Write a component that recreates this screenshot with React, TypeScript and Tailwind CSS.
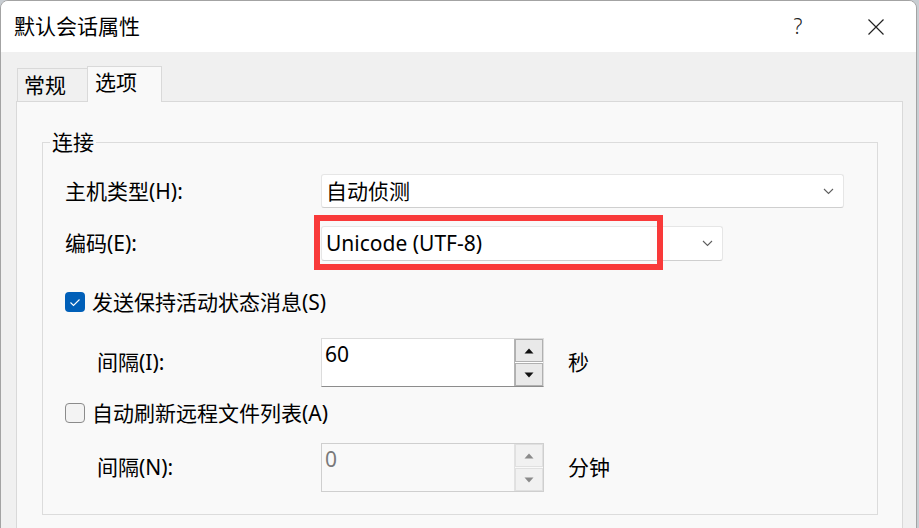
import React from "react";

const font = "font-['Noto_Sans','Noto_Sans_CJK_SC',sans-serif]";

function Chevron() {
  return (
    <svg width="11" height="7" viewBox="0 0 11 7" className="shrink-0">
      <path d="M1 1 L5.5 5.5 L10 1" fill="none" stroke="#5f5f5f" strokeWidth="1.1" />
    </svg>
  );
}

function Combo({ width, text }: { width: string; text: string }) {
  return (
    <div
      className={`${width} h-full flex items-center justify-between bg-white border border-[#e6e6e6] border-b-[#cfcfcf] rounded-[3px] pl-[4px] pr-[9px]`}
    >
      <span className="text-[21px] leading-none text-black">{text}</span>
      <Chevron />
    </div>
  );
}

function Tri({ up, color }: { up: boolean; color: string }) {
  return (
    <svg width="10" height="6" viewBox="0 0 10 6">
      {up ? <path d="M0.5 5.5 L5 0.5 L9.5 5.5 Z" fill={color} /> : <path d="M0.5 0.5 L5 5.5 L9.5 0.5 Z" fill={color} />}
    </svg>
  );
}

function Spin({ value, disabled }: { value: string; disabled?: boolean }) {
  return (
    <div
      className={`w-[223px] h-full flex border ${
        disabled ? "border-[#cfcfcf] bg-[#f9f9f9]" : "border-[#dcdcdc] border-b-[#8c8c8c] bg-white"
      }`}
    >
      <div className={`flex-1 pl-[3px] pt-[2px] text-[21px] leading-[26px] ${disabled ? "text-[#7a7a7a]" : "text-black"}`}>
        {value}
      </div>
      <div className={`w-[29px] flex flex-col gap-[1px] border-l ${disabled ? "border-[#e2e2e2]" : "border-[#b4b4b4]"}`}>
        <div
          className={`flex-1 flex items-center justify-center border ${
            disabled ? "bg-[#f1f1f1] border-[#e0e0e0]" : "bg-[#e9e9e9] border-[#b0b0b0]"
          }`}
        >
          <Tri up color={disabled ? "#8a8a8a" : "#111"} />
        </div>
        <div
          className={`flex-1 flex items-center justify-center border ${
            disabled ? "bg-[#f1f1f1] border-[#e0e0e0]" : "bg-[#e9e9e9] border-[#b0b0b0]"
          }`}
        >
          <Tri up={false} color={disabled ? "#8a8a8a" : "#111"} />
        </div>
      </div>
    </div>
  );
}

function Checkbox({ checked }: { checked: boolean }) {
  return checked ? (
    <div className="w-[20px] h-[20px] rounded-[4px] bg-[#005fb8] flex items-center justify-center shrink-0">
      <svg width="12" height="9" viewBox="0 0 12 9">
        <path d="M1.5 4.5 L4.5 7.5 L10.5 1.5" fill="none" stroke="white" strokeWidth="1.1" />
      </svg>
    </div>
  ) : (
    <div className="w-[20px] h-[20px] rounded-[4px] bg-[#f3f3f3] border border-[#8b8b8b] shrink-0" />
  );
}

export default function App() {
  return (
    <div className={`w-[919px] h-[528px] overflow-hidden bg-[#c8cdd2] ${font} text-black`}>
      <div className="w-[917px] h-[560px] rounded-t-[8px] border border-[#a3a3a3] bg-[#f0f0f0] overflow-hidden">
        {/* Title bar */}
        <div className="h-[51px] bg-white flex items-center">
          <div className="pl-[13px] text-[21px] leading-none text-black">默认会话属性</div>
          <div className="flex-1" />
          <div className="w-[20px] text-[21px] leading-none text-[#222] font-light mr-[60px] text-center">?</div>
          <svg width="16" height="16" viewBox="0 0 16 16" className="mr-[32px]">
            <path d="M0.5 0.5 L15.5 15.5 M15.5 0.5 L0.5 15.5" stroke="#222" strokeWidth="1.2" />
          </svg>
        </div>

        {/* Body */}
        <div className="pl-[15px] pt-[14px]">
          {/* Tabs */}
          <div className="flex items-end h-[35px] pl-[1px]">
            <div className="w-[70px] h-[33px] border border-r-0 border-b-0 border-[#d9d9d9] bg-[#f0f0f0] flex items-center pl-[6px]">
              <span className="text-[21px] leading-none">常规</span>
            </div>
            <div className="relative z-10 w-[75px] h-[36px] -mb-[1px] border border-b-0 border-[#d9d9d9] bg-[#f9f9f9] flex items-start pt-[5px] pl-[7px]">
              <span className="text-[21px] leading-none">选项</span>
            </div>
          </div>

          {/* Panel */}
          <div className="w-[887px] h-[460px] border border-[#d9d9d9] bg-[#f9f9f9] pl-[25px] pt-[40px]">
            {/* Group box */}
            <div className="relative w-[836px] border border-[#dcdcdc] pt-[31px] pb-[22px]">
              <div className="absolute left-[7px] -top-[13px] px-[2px] bg-[#f9f9f9] text-[21px] leading-[24px]">连接</div>

              <div className="flex items-center h-[34px] pl-[22px]">
                <div className="w-[256px] text-[21px] leading-none">主机类型(H):</div>
                <Combo width="w-[523px]" text="自动侦测" />
              </div>

              <div className="flex items-center h-[35px] pl-[22px] mt-[18px]">
                <div className="w-[256px] text-[21px] leading-none">编码(E):</div>
                <Combo width="w-[402px]" text="Unicode (UTF-8)" />
              </div>

              <div className="flex items-center h-[20px] pl-[22px] mt-[31px] gap-[7px]">
                <Checkbox checked />
                <span className="text-[21px] leading-none">发送保持活动状态消息(S)</span>
              </div>

              <div className="flex items-center h-[49px] pl-[22px] mt-[26px]">
                <div className="w-[256px] pl-[32px] text-[21px] leading-none">间隔(I):</div>
                <Spin value="60" />
                <span className="ml-[24px] text-[21px] leading-none">秒</span>
              </div>

              <div className="flex items-center h-[20px] pl-[22px] mt-[16px] gap-[7px]">
                <Checkbox checked={false} />
                <span className="text-[21px] leading-none">自动刷新远程文件列表(A)</span>
              </div>

              <div className="flex items-center h-[49px] pl-[22px] mt-[20px]">
                <div className="w-[256px] pl-[32px] text-[21px] leading-none">间隔(N):</div>
                <Spin value="0" disabled />
                <span className="ml-[24px] text-[21px] leading-none">分钟</span>
              </div>
            </div>
          </div>
        </div>
      </div>

      {/* Highlight rectangle overlay */}
      <div className="absolute left-[314px] top-[215px] w-[349px] h-[55px] border-[6px] border-[#f93a3a] pointer-events-none" />
    </div>
  );
}
